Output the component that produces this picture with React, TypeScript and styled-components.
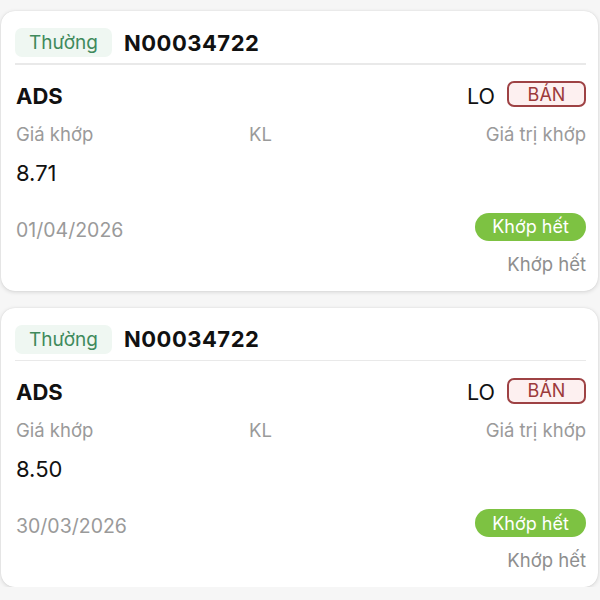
import React from "react";
import styled, { createGlobalStyle } from "styled-components";

const Global = createGlobalStyle`
  html, body { margin: 0; padding: 0; background: #f6f6f6; }
  body { font-family: Inter, "Noto Sans", "Liberation Sans", sans-serif; -webkit-font-smoothing: antialiased; }
`;

const List = styled.div`
  display: flex;
  flex-direction: column;
  gap: 17px;
  padding: 11px 2px 0 1px;
`;

const Card = styled.div`
  background: #ffffff;
  border-radius: 14px;
  box-shadow: 0 1px 4px rgba(0, 0, 0, 0.14), 0 0 1px rgba(0, 0, 0, 0.12);
  padding: 17px 12px 15px 14px;
  display: flex;
  flex-direction: column;
`;

const Header = styled.div`
  display: flex;
  align-items: center;
  gap: 12px;
  height: 29px;
`;

const TypeBadge = styled.span`
  display: inline-flex;
  align-items: center;
  justify-content: center;
  width: 97px;
  height: 29px;
  border-radius: 7px;
  background: #eff7f2;
  color: #3f8a5c;
  font-size: 19px;
`;

const OrderNo = styled.span`
  font-size: 22px;
  font-weight: 700;
  color: #111;
  letter-spacing: 0.5px;
`;

const Divider = styled.div`
  height: 1.5px;
  background: #e9e9e9;
  margin-top: 6px;
`;

const Row = styled.div<{ $top: number; $h: number }>`
  display: flex;
  align-items: center;
  justify-content: space-between;
  margin-top: ${(p) => p.$top}px;
  height: ${(p) => p.$h}px;
`;

const Symbol = styled.span`
  font-size: 22px;
  font-weight: 700;
  color: #111;
  padding-left: 1px;
`;

const Right = styled.div`
  display: flex;
  align-items: center;
  gap: 12px;
`;

const Board = styled.span`
  font-size: 21.5px;
  color: #111;
`;

const SideBadge = styled.span`
  display: inline-flex;
  align-items: center;
  justify-content: center;
  box-sizing: border-box;
  width: 79px;
  height: 26px;
  margin-bottom: 3px;
  border: 2px solid #9e4244;
  border-radius: 7px;
  background: #fdf0f0;
  color: #9c3a3a;
  font-size: 18px;
`;

const LabelRow = styled.div`
  display: grid;
  grid-template-columns: 233px auto 1fr;
  align-items: center;
  margin-top: 12px;
  height: 24px;
`;

const Label = styled.span<{ $right?: boolean }>`
  font-size: 18.5px;
  color: #9a9a9a;
  text-align: ${(p) => (p.$right ? "right" : "left")};
  padding-left: ${(p) => (p.$right ? "0" : "1px")};
`;

const Value = styled.span`
  font-size: 22px;
  color: #111;
  padding-left: 1px;
`;

const DateText = styled.span`
  font-size: 19.5px;
  color: #9a9a9a;
  padding-left: 1px;
  margin-top: 6px;
`;

const StatusPill = styled.span`
  display: inline-flex;
  align-items: center;
  justify-content: center;
  width: 111px;
  height: 28px;
  border-radius: 14px;
  background: #7dc242;
  color: #ffffff;
  font-size: 18px;
`;

const StatusText = styled.span`
  margin-left: auto;
  font-size: 18.5px;
  color: #8e8e8e;
`;

type Order = { price: string; date: string };

const orders: Order[] = [
  { price: "8.71", date: "01/04/2026" },
  { price: "8.50", date: "30/03/2026" },
];

function OrderCard({ o }: { o: Order }) {
  return (
    <Card>
      <Header>
        <TypeBadge>Thường</TypeBadge>
        <OrderNo>N00034722</OrderNo>
      </Header>
      <Divider />
      <Row $top={17} $h={28}>
        <Symbol>ADS</Symbol>
        <Right>
          <Board>LO</Board>
          <SideBadge>BÁN</SideBadge>
        </Right>
      </Row>
      <LabelRow>
        <Label>Giá khớp</Label>
        <Label>KL</Label>
        <Label $right>Giá trị khớp</Label>
      </LabelRow>
      <Row $top={13} $h={28}>
        <Value>{o.price}</Value>
      </Row>
      <Row $top={26} $h={28}>
        <DateText>{o.date}</DateText>
        <StatusPill>Khớp hết</StatusPill>
      </Row>
      <Row $top={11} $h={24}>
        <StatusText>Khớp hết</StatusText>
      </Row>
    </Card>
  );
}

export default function App() {
  return (
    <>
      <Global />
      <List>
        {orders.map((o, i) => (
          <OrderCard key={i} o={o} />
        ))}
      </List>
    </>
  );
}
